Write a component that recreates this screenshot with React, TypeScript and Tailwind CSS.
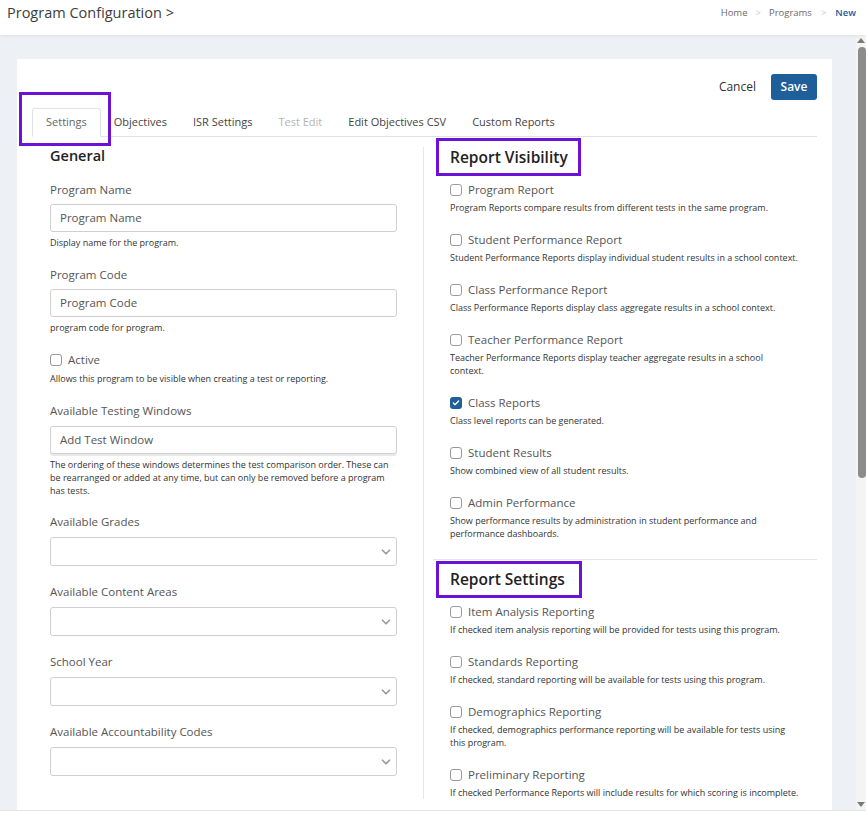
import { ChevronDown, Check } from "lucide-react";

type Tab = { name: string; active?: boolean; disabled?: boolean };

type ReportOption = { label: string; desc: string[]; checked?: boolean };

const tabs: Tab[] = [
  { name: "Settings", active: true },
  { name: "Objectives" },
  { name: "ISR Settings" },
  { name: "Test Edit", disabled: true },
  { name: "Edit Objectives CSV" },
  { name: "Custom Reports" },
];

const visibilityOptions: ReportOption[] = [
  {
    label: "Program Report",
    desc: ["Program Reports compare results from different tests in the same program."],
  },
  {
    label: "Student Performance Report",
    desc: ["Student Performance Reports display individual student results in a school context."],
  },
  {
    label: "Class Performance Report",
    desc: ["Class Performance Reports display class aggregate results in a school context."],
  },
  {
    label: "Teacher Performance Report",
    desc: ["Teacher Performance Reports display teacher aggregate results in a school", "context."],
  },
  { label: "Class Reports", desc: ["Class level reports can be generated."], checked: true },
  { label: "Student Results", desc: ["Show combined view of all student results."] },
  {
    label: "Admin Performance",
    desc: [
      "Show performance results by administration in student performance and",
      "performance dashboards.",
    ],
  },
];

const settingsOptions: ReportOption[] = [
  {
    label: "Item Analysis Reporting",
    desc: ["If checked item analysis reporting will be provided for tests using this program."],
  },
  {
    label: "Standards Reporting",
    desc: ["If checked, standard reporting will be available for tests using this program."],
  },
  {
    label: "Demographics Reporting",
    desc: [
      "If checked, demographics performance reporting will be available for tests using",
      "this program.",
    ],
  },
  {
    label: "Preliminary Reporting",
    desc: ["If checked Performance Reports will include results for which scoring is incomplete."],
  },
];

const Checkbox = ({ checked }: { checked?: boolean }) =>
  checked ? (
    <span className="w-[12px] h-[12px] rounded-[3px] bg-[#1f5f99] flex items-center justify-center shrink-0">
      <Check size={8} strokeWidth={4} className="text-white" />
    </span>
  ) : (
    <span className="w-[12px] h-[12px] rounded-[3px] border border-[#9a9a9a] bg-white shrink-0" />
  );

const HelpText = ({ lines }: { lines: string[] }) => (
  <div className="mt-[4px] text-[9px] leading-[13px] text-[#333]">
    {lines.map((line) => (
      <div key={line} className="whitespace-nowrap">
        {line}
      </div>
    ))}
  </div>
);

const TextField = ({ label, placeholder, help }: { label: string; placeholder: string; help: string[] }) => (
  <div className="mt-[18px]">
    <div className="text-[11.5px] leading-[16px] text-[#555]">{label}</div>
    <div className="mt-[6px] h-[28px] border border-[#cfcfcf] rounded-[3px] flex items-center px-[9px] text-[11.5px] text-[#555]">
      {placeholder}
    </div>
    <HelpText lines={help} />
  </div>
);

const SelectField = ({ label, first }: { label: string; first?: boolean }) => (
  <div className={first ? "mt-[17px]" : "mt-[18px]"}>
    <div className="text-[11.5px] leading-[16px] text-[#555]">{label}</div>
    <div className="mt-[7px] h-[29px] border border-[#cfcfcf] rounded-[3px] flex items-center justify-end pr-[3px]">
      <ChevronDown size={14} strokeWidth={3} className="text-[#9a9a9a]" />
    </div>
  </div>
);

const OptionItem = ({ option, first }: { option: ReportOption; first?: boolean }) => (
  <div className={first ? "mt-[16px]" : "mt-[18px]"}>
    <label className="flex items-center gap-[6px] h-[16px]">
      <Checkbox checked={option.checked} />
      <span className="text-[11.5px] text-[#555]">{option.label}</span>
    </label>
    <div className="mt-[3px] text-[9px] leading-[13px] text-[#333]">
      {option.desc.map((line) => (
        <div key={line} className="whitespace-nowrap">
          {line}
        </div>
      ))}
    </div>
  </div>
);

// purple outline drawn on top of a heading or tab
const Highlight = ({ className }: { className: string }) => (
  <span className={`absolute border-[3px] border-[#6c12d6] pointer-events-none ${className}`} />
);

export default function App() {
  return (
    <div className="h-screen overflow-hidden flex flex-col bg-white font-['Open_Sans',sans-serif]">
      <header className="h-[35px] shrink-0 bg-white flex items-start justify-between pt-[4px] pl-[7px] pr-[10px] shadow-[0_1px_4px_rgba(0,0,0,0.08)] relative z-10">
        <h1 className="text-[14.5px] leading-[18px] text-[#3d3d3d]">Program Configuration &gt;</h1>
        <nav className="flex items-center h-[18px] text-[9.5px] text-[#6b6b6b]">
          <span>Home</span>
          <span className="mx-[8px] text-[#c9c9c9]">&gt;</span>
          <span>Programs</span>
          <span className="mx-[9px] text-[#c9c9c9]">&gt;</span>
          <span className="font-semibold text-[#1f5c99]">New</span>
        </nav>
      </header>

      <div className="flex-1 flex min-h-0">
        <main className="flex-1 bg-[#edf0f4] pl-[17px] pr-[24px] pt-[24px] overflow-hidden">
          <div className="bg-white px-[15px] pt-[15px] pb-[40px]">
            <div className="flex justify-end items-center gap-[15px] h-[26px]">
              <button className="text-[12px] text-[#333]">Cancel</button>
              <button className="h-[26px] w-[46px] rounded-[3px] bg-[#1f5f99] text-white text-[12px] font-semibold">
                Save
              </button>
            </div>

            <ul className="mt-[8px] flex border-b border-[#dfe2e6]">
              {tabs.map((tab) => (
                <li
                  key={tab.name}
                  className={`relative h-[28px] px-[13px] flex items-center text-[11px] ${
                    tab.active
                      ? "border border-[#dfe2e6] border-b-white rounded-t-[3px] -mb-px h-[29px] text-[#666]"
                      : tab.disabled
                        ? "text-[#b5b5b5]"
                        : "text-[#444]"
                  }`}
                >
                  {tab.name}
                  {tab.active && <Highlight className="left-[-14px] top-[-17px] w-[92px] h-[54px]" />}
                </li>
              ))}
            </ul>

            <div className="mt-[10px] flex">
              <section className="w-[392px] shrink-0 pl-[18px] pr-[26px] border-r border-[#e6e6e6] pb-[20px]">
                <h2 className="text-[14.5px] leading-[18px] font-semibold text-[#222]">General</h2>
                <div className="-mt-px">
                  <TextField label="Program Name" placeholder="Program Name" help={["Display name for the program."]} />
                </div>
                <TextField label="Program Code" placeholder="Program Code" help={["program code for program."]} />
                <div className="mt-[18px]">
                  <label className="flex items-center gap-[6px] h-[16px]">
                    <Checkbox />
                    <span className="text-[11.5px] text-[#555]">Active</span>
                  </label>
                  <HelpText lines={["Allows this program to be visible when creating a test or reporting."]} />
                </div>
                <div className="mt-[18px]">
                  <div className="text-[11.5px] leading-[16px] text-[#555]">Available Testing Windows</div>
                  <div className="mt-[7px] h-[28px] border border-[#cfcfcf] rounded-[3px] flex items-center px-[9px] text-[11.5px] text-[#555] shadow-[0_2px_0_#e8e8e8]">
                    Add Test Window
                  </div>
                  <HelpText
                    lines={[
                      "The ordering of these windows determines the test comparison order. These can",
                      "be rearranged or added at any time, but can only be removed before a program",
                      "has tests.",
                    ]}
                  />
                </div>
                <SelectField label="Available Grades" first />
                <SelectField label="Available Content Areas" />
                <div className="mt-[1px]">
                  <SelectField label="School Year" />
                </div>
                <div className="mt-[1px]">
                  <SelectField label="Available Accountability Codes" />
                </div>
              </section>

              <section className="flex-1 pl-[26px]">
                <div className="relative pt-[1px]">
                  <h2 className="text-[15.5px] leading-[18px] font-semibold text-[#222]">Report Visibility</h2>
                  <Highlight className="left-[-14px] top-[-9px] w-[145px] h-[38px]" />
                </div>
                {visibilityOptions.map((option, i) => (
                  <OptionItem key={option.label} option={option} first={i === 0} />
                ))}

                <div className="mt-[19px] -ml-[17px] border-t border-[#e6e6e6]" />

                <div className="relative mt-[10px]">
                  <h2 className="text-[15.5px] leading-[18px] font-semibold text-[#222]">Report Settings</h2>
                  <Highlight className="left-[-14px] top-[-9px] w-[146px] h-[37px]" />
                </div>
                {settingsOptions.map((option, i) => (
                  <OptionItem key={option.label} option={option} first={i === 0} />
                ))}
              </section>
            </div>
          </div>
        </main>

        {/* vertical scrollbar */}
        <div className="w-[10px] shrink-0 bg-[#f4f4f4] flex flex-col items-center pt-[3px] pb-[3px]">
          <span className="w-0 h-0 border-l-[4px] border-r-[4px] border-b-[5px] border-l-transparent border-r-transparent border-b-[#7a7a7a]" />
          <span className="mt-[4px] w-[8px] h-[431px] rounded-[4px] bg-[#8c8c8c] ml-[2px]" />
          <span className="mt-auto w-0 h-0 border-l-[4px] border-r-[4px] border-t-[5px] border-l-transparent border-r-transparent border-t-[#7a7a7a]" />
        </div>
      </div>

      <div className="h-[5px] shrink-0 bg-white border-t border-[#e3e3e3]" />
    </div>
  );
}
